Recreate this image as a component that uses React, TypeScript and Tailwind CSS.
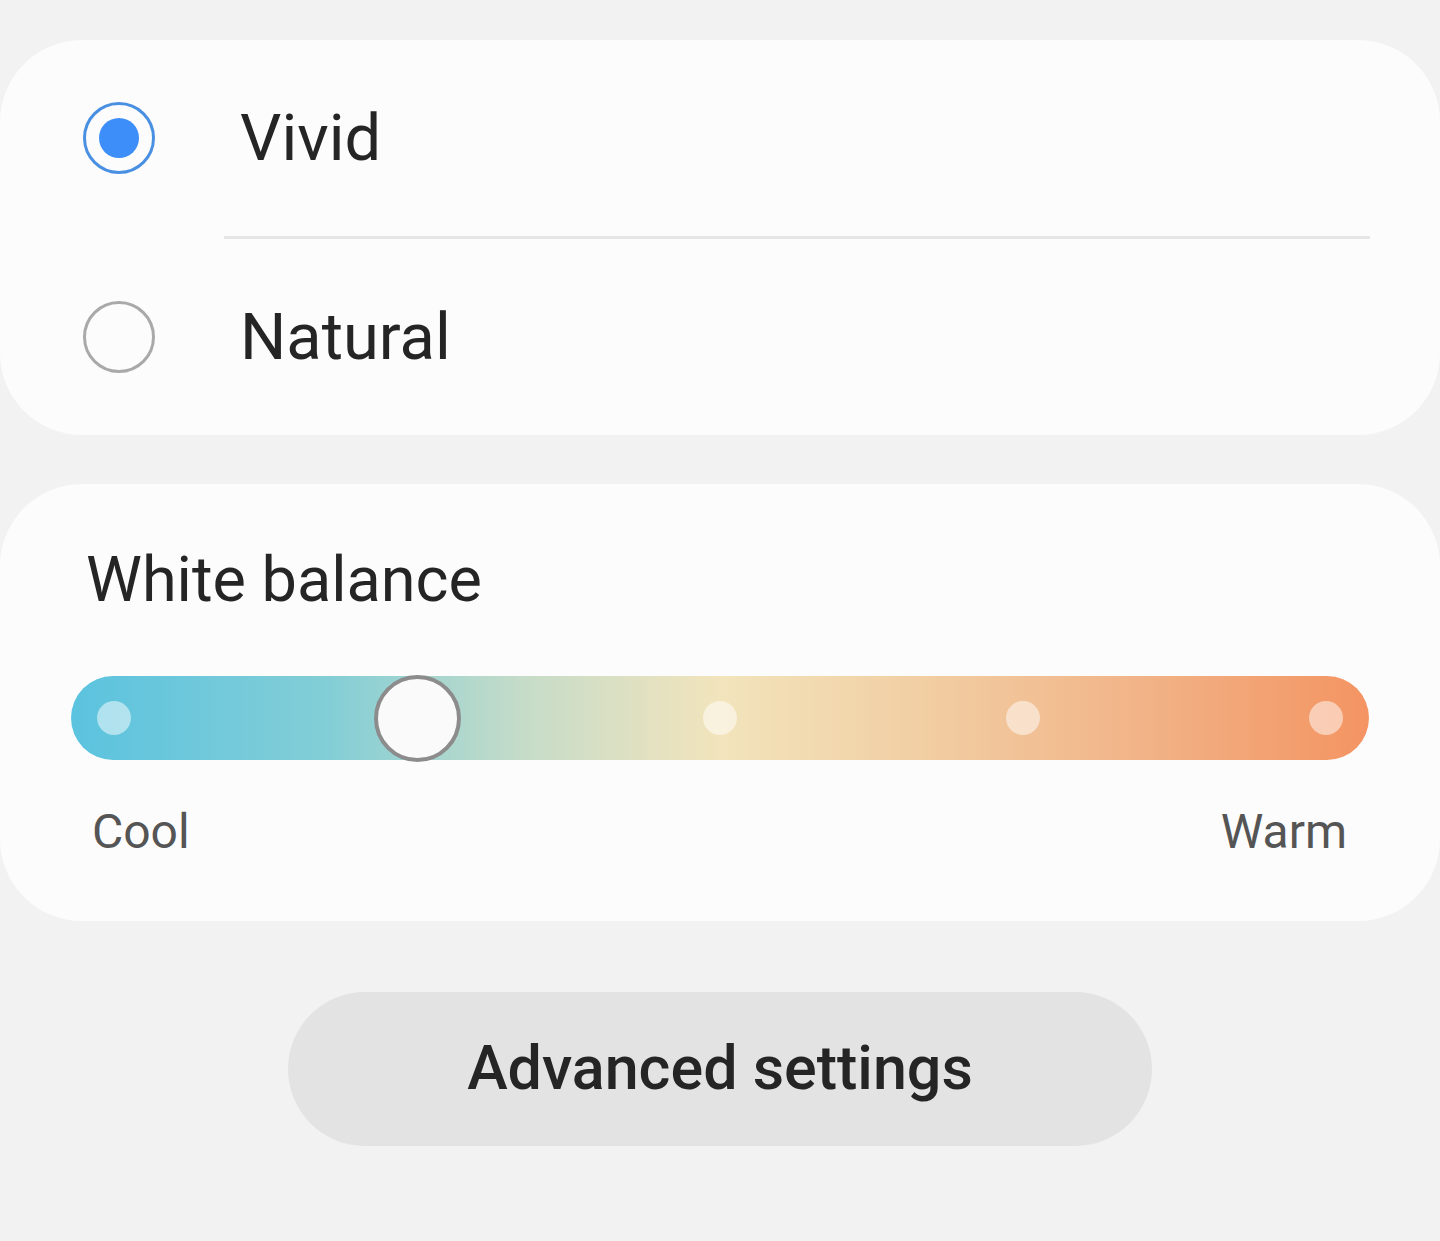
const font = { fontFamily: 'Roboto, "Noto Sans", sans-serif' };

function Radio({ checked }: { checked: boolean }) {
  return checked ? (
    <div className="flex h-[72px] w-[72px] shrink-0 items-center justify-center rounded-full border-[3px] border-[#4a90e2]">
      <div className="h-[40px] w-[40px] rounded-full bg-[#3d8ef8]" />
    </div>
  ) : (
    <div className="h-[72px] w-[72px] shrink-0 rounded-full border-[3px] border-[#a9a9a9]" />
  );
}

function Option({ label, checked }: { label: string; checked: boolean }) {
  return (
    <div className="flex h-[196px] items-center pl-[83px]">
      <Radio checked={checked} />
      <span className="ml-[85px] text-[65px] leading-none text-[#252525]">{label}</span>
    </div>
  );
}

export default function App() {
  const dots = [114, 720, 1023, 1326];
  return (
    <div className="min-h-[1241px] bg-[#f2f2f2] pt-[40px]" style={font}>
      <div className="rounded-[82px] bg-[#fcfcfc]">
        <Option label="Vivid" checked />
        <div className="ml-[224px] mr-[70px] h-[3px] bg-[#e6e6e6]" />
        <Option label="Natural" checked={false} />
      </div>

      <div className="mt-[49px] h-[437px] rounded-[82px] bg-[#fcfcfc] pt-[56px]">
        <h2 className="pl-[86px] text-[63px] leading-[80px] text-[#252525]">White balance</h2>
        <div className="relative mx-[71px] mt-[56px] h-[84px] rounded-full bg-[linear-gradient(90deg,#5bc3df_0%,#83ced6_20%,#c6dcc8_35%,#f2e4bc_50%,#f2cfa4_65%,#f1b488_82%,#f49462_100%)]">
          {dots.map((x) => (
            <div
              key={x}
              className="absolute top-[25px] h-[34px] w-[34px] rounded-full bg-white/50"
              style={{ left: x - 71 - 17 }}
            />
          ))}
          <div className="absolute left-[303px] top-[-1px] h-[87px] w-[87px] rounded-full border-[4px] border-[#8c8c8c] bg-[#fafafa]" />
        </div>
        <div className="mt-[42px] flex justify-between pl-[92px] pr-[93px] text-[48px] leading-[60px] text-[#555555]">
          <span>Cool</span>
          <span>Warm</span>
        </div>
      </div>

      <div className="mt-[71px] flex justify-center">
        <button className="flex h-[154px] w-[864px] items-center justify-center rounded-full bg-[#e3e3e3] text-[61px] font-medium text-[#252525]">
          Advanced settings
        </button>
      </div>
    </div>
  );
}
